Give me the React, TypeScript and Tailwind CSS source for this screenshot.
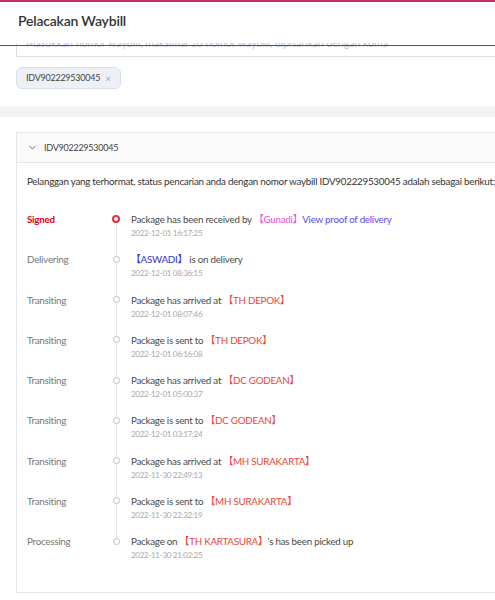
import React from 'react';

type Part = { t: string; c?: string };
type Track = { status: string; time: string; parts: Part[] };

const LOC = 'text-[#e8463a]';

const TRACKS: Track[] = [
  {
    status: 'Signed',
    time: '2022-12-01 16:17:25',
    parts: [
      { t: 'Package has been received by ' },
      { t: '【Gunadi】', c: 'text-[#ec4fd3]' },
      { t: 'View proof of delivery', c: 'text-[#5a4cf2]' },
    ],
  },
  {
    status: 'Delivering',
    time: '2022-12-01 08:36:15',
    parts: [{ t: '【ASWADI】', c: 'text-[#2a35d4]' }, { t: ' is on delivery' }],
  },
  {
    status: 'Transiting',
    time: '2022-12-01 08:07:46',
    parts: [{ t: 'Package has arrived at ' }, { t: '【TH DEPOK】', c: LOC }],
  },
  {
    status: 'Transiting',
    time: '2022-12-01 06:16:08',
    parts: [{ t: 'Package is sent to ' }, { t: '【TH DEPOK】', c: LOC }],
  },
  {
    status: 'Transiting',
    time: '2022-12-01 05:00:37',
    parts: [{ t: 'Package has arrived at ' }, { t: '【DC GODEAN】', c: LOC }],
  },
  {
    status: 'Transiting',
    time: '2022-12-01 03:17:24',
    parts: [{ t: 'Package is sent to ' }, { t: '【DC GODEAN】', c: LOC }],
  },
  {
    status: 'Transiting',
    time: '2022-11-30 22:49:13',
    parts: [{ t: 'Package has arrived at ' }, { t: '【MH SURAKARTA】', c: LOC }],
  },
  {
    status: 'Transiting',
    time: '2022-11-30 22:32:19',
    parts: [{ t: 'Package is sent to ' }, { t: '【MH SURAKARTA】', c: LOC }],
  },
  {
    status: 'Processing',
    time: '2022-11-30 21:02:25',
    parts: [
      { t: 'Package on ' },
      { t: '【TH KARTASURA】', c: LOC },
      { t: "'s has been picked up" },
    ],
  },
];

const TrackRow = ({ track, first, last }: { track: Track; first: boolean; last: boolean }) => (
  <div className="flex h-[40.25px]">
    <div
      className={
        first
          ? 'w-[84px] text-[9.8px] leading-[14px] tracking-[-0.25px] font-bold text-[#e60012]'
          : 'w-[84px] text-[9.8px] leading-[14px] tracking-[-0.25px] text-[#777]'
      }
    >
      {track.status}
    </div>
    {/* dot + connector */}
    <div className="relative w-[10px] flex justify-center">
      {!last && <div className="absolute left-[4.5px] top-[7px] h-[40.25px] w-px bg-[#e6e6e6]" />}
      <div
        className={
          first
            ? 'relative mt-[3px] h-[8px] w-[8px] rounded-full border-2 border-[#e8303a] bg-white'
            : 'relative mt-[3.5px] h-[7px] w-[7px] rounded-full border border-[#bdbdbd] bg-white'
        }
      />
    </div>
    <div className="ml-[10px] flex flex-col">
      <div className="text-[9.8px] leading-[14px] tracking-[-0.25px] text-[#4a4a4a] whitespace-nowrap">
        {track.parts.map((p, i) => (
          <span key={i} className={p.c}>
            {p.t}
          </span>
        ))}
      </div>
      <div className="mt-px text-[8px] leading-[12px] tracking-[-0.3px] text-[#a8a8a8]">{track.time}</div>
    </div>
  </div>
);

export default function App() {
  return (
    <div className="relative w-full min-h-[600px] overflow-hidden bg-white font-['Lato','Noto_Sans_CJK_SC',sans-serif]">
      {/* page header */}
      <div className="relative z-10 h-[43px] border-t-2 border-[#c0305e] bg-white px-[18px] pt-[10px]">
        <h1 className="text-[14px] leading-[18px] tracking-[-0.2px] font-semibold text-[#333]">Pelacakan Waybill</h1>
      </div>
      <div className="absolute left-0 right-0 top-[45px] z-20 h-px bg-[#e8141c]" />

      <div className="w-[640px]">
        {/* search input */}
        <div className="-mt-[14px] ml-4 h-[28px] border border-[#dcdfe6] px-[9px] text-[10.5px] leading-[26px] text-[#c0c4cc] whitespace-nowrap">
          Masukkan nomor waybill, maksimal 10 nomor waybill, dipisahkan dengan koma
        </div>

        {/* waybill chips */}
        <div className="ml-4 mt-[10px] flex">
          <div className="flex h-[22px] items-center gap-[5px] rounded-[6px] border border-[#d9dfe8] bg-[#edf1f7] pl-[9px] pr-[9px] text-[9px] tracking-[-0.25px] text-[#444]">
            <span>IDV902229530045</span>
            <span className="text-[10px] text-[#aaa]">×</span>
          </div>
        </div>
      </div>

      <div className="mt-[17px] h-[11px] w-full bg-[#f2f3f6]" />

      {/* result card */}
      <div className="ml-4 mt-[15px] w-[640px] border border-[#e4e6ea]">
        <div className="flex h-[30px] items-center border-b border-[#e4e6ea] bg-[#fafafa] pl-[12px] text-[9px] tracking-[-0.25px] text-[#444]">
          <svg width="7" height="5" viewBox="0 0 7 5" className="mr-[8px]">
            <path d="M0.5 0.8 L3.5 4 L6.5 0.8" fill="none" stroke="#777" strokeWidth="1" />
          </svg>
          <span>IDV902229530045</span>
        </div>
        <div className="px-[10px] pt-[11px] pb-[18px]">
          <p className="text-[9.8px] leading-[14px] tracking-[-0.25px] text-[#333] whitespace-nowrap">
            Pelanggan yang terhormat, status pencarian anda dengan nomor waybill IDV902229530045 adalah sebagai berikut:
          </p>
          <div className="mt-[24px]">
            {TRACKS.map((t, i) => (
              <TrackRow key={i} track={t} first={i === 0} last={i === TRACKS.length - 1} />
            ))}
          </div>
        </div>
      </div>
    </div>
  );
}
